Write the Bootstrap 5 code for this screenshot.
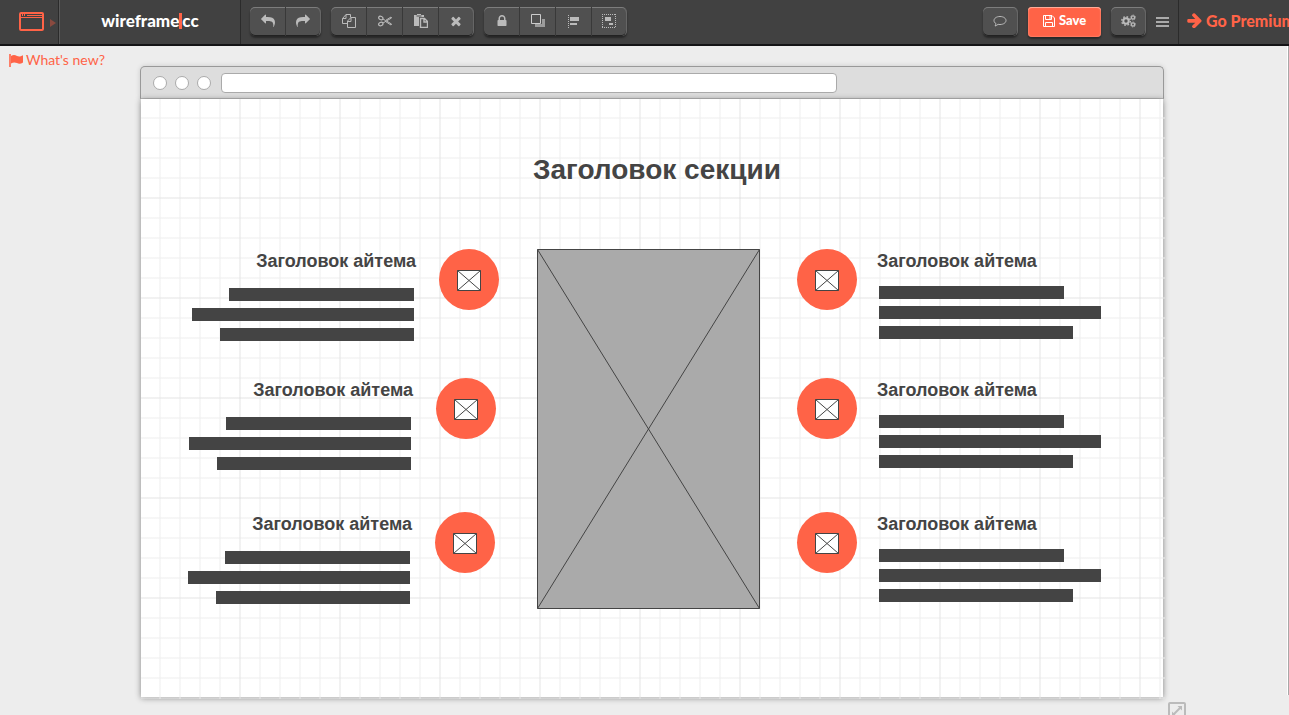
<!DOCTYPE html>
<html lang="ru">
<head>
<meta charset="utf-8">
<meta name="viewport" content="width=device-width, initial-scale=1">
<title>wireframe|cc</title>
<link href="https://cdn.jsdelivr.net/npm/bootstrap@5.3.0/dist/css/bootstrap.min.css" rel="stylesheet">
<style>
:root { --accent: #ff6347; --ink: #444; }
body { background: #ededed; font-family: Lato, sans-serif; }
svg { display: block; flex-shrink: 0; }

/* top bar */
.topbar { height: 46px; background: #414141; border-bottom: 2px solid #141416; }
.topbar a { text-decoration: none; }
.device-btn { width: 60px; padding: 0 0 2px 19px; gap: 6px; background: none; border: 0; border-right: 1px solid #5a5a5a; box-shadow: inset -1px 0 #2b2b2b; color: var(--accent); }
.brand-link { width: 181px; padding-bottom: 2px; border-right: 1px solid #2b2b2b; font-size: 17px; font-weight: 900; color: #fff; }
.brand-link i { width: 3px; height: 16px; background: var(--accent); }
.tools { gap: 10px; padding-left: 9px; padding-top: 7px; }
.tool-set { border-radius: 5px; box-shadow: 0 2px 2px rgba(0,0,0,.4); }
.tool { width: 36px; height: 29px; padding: 0 0 2px; border: 0; border-radius: 0; background: #505050; color: #bbb; box-shadow: inset 0 1px #7d7d7d, inset 0 -1px #222; border-right: 1px solid #393939; display: flex; align-items: center; justify-content: center; }
.tool:hover { background: #5a5a5a; color: #fff; }
.tool:first-child { border-top-left-radius: 5px; border-bottom-left-radius: 5px; }
.tool:last-child { width: 35px; border-top-right-radius: 5px; border-bottom-right-radius: 5px; border-right-color: #666; }
.actions { gap: 10px; padding-top: 7px; }
.save-btn { width: 73px; height: 30px; padding: 0 0 2px; gap: 4px; border: 0; border-radius: 4px; background: var(--accent); color: #fff; font-size: 13px; font-weight: 900; box-shadow: inset 0 1px #ffab98, inset 0 0 2px #ffab98, 0 2px 2px rgba(0,0,0,.4); }
.menu-btn { width: 32px; height: 28px; padding: 0; border: 0; background: none; color: #aaa; }
.premium { width: 111px; padding-left: 8px; gap: 4px; border-left: 1px solid #2b2b2b; font-size: 16px; font-weight: 900; color: var(--accent); white-space: nowrap; padding-bottom: 3px; overflow: hidden; }

/* workspace */
.side-left { width: 140px; padding: 4px 0 0 9px; }
.side-left a { font-size: 14px; line-height: 20px; gap: 3px; color: var(--accent); text-decoration: none; }
.side-right { width: 125px; padding-left: 4px; }
.rail { width: 2px; height: calc(100% - 20px); background: #a8a8a8; border-left: 1px solid #fff; }
.resize { width: 18px; height: 18px; margin-bottom: -5px; padding: 0; border: 2px solid #bbb; border-radius: 2px; background: none; color: #bbb; }
.sheet { margin-top: 20px; }
.chrome-bar { height: 33px; padding-left: 12px; gap: 8px; background: #ddd; border: 1px solid #999; border-bottom-color: #bbb; border-radius: 5px 5px 0 0; box-shadow: 0 0 5px rgba(0,0,0,.15); position: relative; }
.dot { width: 14px; height: 14px; border: 1px solid #aaa; border-radius: 50%; background: #fff; }
.address { width: 61%; height: 20px; margin-left: 2px; padding: 0 6px; border: 1px solid #aaa; border-radius: 4px; background: #fff; font-size: 12px; }
.artboard { height: 598px; margin: 0 1px; background: #fff; box-shadow: 0 1px 6px rgba(0,0,0,.45); position: relative; }
.artboard::before { content: ""; position: absolute; inset: 0 -2px -2px 0;
  background:
    linear-gradient(90deg, transparent 98px, rgba(0,0,0,.02) 98px) 0 0/100px 100px,
    linear-gradient(transparent 98px, rgba(0,0,0,.02) 98px) 0 0/100px 100px,
    linear-gradient(90deg, transparent 18px, rgba(238,238,238,.5) 18px) 0 0/20px 20px,
    linear-gradient(transparent 18px, rgba(238,238,238,.5) 18px) 0 0/20px 20px; }

/* stencils placed on the artboard */
.stencil { position: absolute; color: var(--ink); font-family: "Liberation Sans", sans-serif; }
.stencil h1 { margin: 0; font-size: 28px; line-height: 32px; font-weight: 700; white-space: nowrap; }
.stencil h2 { margin: 0; font-size: 18px; line-height: 24px; font-weight: 700; white-space: nowrap; }
.feature { gap: 22px; }
.feature-copy { width: 222px; }
.feature-start .feature-copy { margin-right: 3px; }
.feature-start h2 { margin-right: -2px; }
.feature-start .bars { align-items: flex-end; padding-top: 15px; }
.feature-end h2 { margin-left: -2px; }
.feature-end .bars { padding-top: 13px; }
.bars { gap: 7px; }
.bars span { height: 13px; background: var(--ink); }
.bar-a { width: 185px; } .bar-b { width: 222px; } .bar-c { width: 194px; }
.disc { width: 60px; height: 61px; border-radius: 50%; background: var(--accent); padding-top: 2px; }
</style>
</head>
<body class="vh-100 overflow-hidden d-flex flex-column">

<svg width="0" height="0" class="position-absolute" aria-hidden="true">
  <symbol id="i-share" viewBox="0 0 1792 1792"><path fill="currentColor" d="M1792 640q0 26-19 45l-512 512q-19 19-45 19t-45-19-19-45v-256h-224q-98 0-175.500 6t-154 21.500-133 42.500-105.500 69.500-80 101-48.500 138.500-17.500 181q0 55 5 123 0 6 2.500 23.500t2.500 26.500q0 15-8.500 25t-23.500 10q-16 0-28-17-7-9-13-22t-13.500-30-10.500-24q-127-285-127-451 0-199 53-333 162-403 875-403h224v-256q0-26 19-45t45-19 45 19l512 512q19 19 19 45z"/></symbol>
  <symbol id="i-mail" viewBox="0 0 24 21"><path fill="#fff" stroke="#444" d="M.5 .5h23v20h-23zl23 20M23.500 .5l-23 20"/></symbol>
</svg>

<header class="topbar d-flex flex-shrink-0">
  <button class="device-btn d-flex align-items-center" type="button" aria-label="Device">
    <svg width="25" height="19" viewBox="0 0 25 19" fill="none" stroke="currentColor"><rect x="1" y="1" width="23" height="17" rx="1" stroke-width="2"/><path stroke-width="1" d="M1 5.500h23M3.500 2v2M5.500 2v2M8 3.500h15"/></svg>
    <svg width="6" height="8" viewBox="0 0 6 8" class="mt-1"><path d="M0 0l6 4-6 4z" fill="#8a4a3f"/></svg>
  </button>
  <a class="brand-link d-flex align-items-center justify-content-center" href="#">wireframe<i></i>cc</a>
  <nav class="tools d-flex align-items-start" aria-label="Edit">
    <div class="tool-set d-flex">
      <button class="tool" type="button" aria-label="Undo"><svg width="14" height="14"><use href="#i-share" transform="matrix(-1 0 0 1 14 0)"/></svg></button>
      <button class="tool" type="button" aria-label="Redo"><svg width="14" height="14"><use href="#i-share"/></svg></button>
    </div>
    <div class="tool-set d-flex">
      <button class="tool" type="button" aria-label="Copy"><svg width="14" height="14" viewBox="0 0 14 14" fill="none" stroke="currentColor"><path d="M5.500 9.500h-5v-5l3.500-4h4.500v3M.5 4.500h3.500v-4M9 3.500h4.500v10h-8v-6.500l3.500-3.500zM5.500 7.500h3.500v-4"/></svg></button>
      <button class="tool" type="button" aria-label="Cut"><svg width="14" height="14" viewBox="0 0 14 14" fill="none" stroke="currentColor"><ellipse cx="2.800" cy="4" rx="2.200" ry="1.700" transform="rotate(25 2.800 4)" stroke-width="1.200"/><ellipse cx="2.800" cy="10" rx="2.200" ry="1.700" transform="rotate(-25 2.800 10)" stroke-width="1.200"/><path d="M5 5l2.500 1.500 5.500-3.500.5 1L5 9M7.500 7.500l5.500 3.500.5-1-5-3"/></svg></button>
      <button class="tool" type="button" aria-label="Paste"><svg width="14" height="14" viewBox="0 0 14 14"><path fill="currentColor" d="M0 1h3V0h4v1h3v2H5v9H0z"/><path fill="none" stroke="currentColor" stroke-width="1.400" d="M6.500 4.500h4l3 3v6h-7zM10 4.500v3.500h3.500"/><path stroke="#505050" d="M2.500 2h5"/></svg></button>
      <button class="tool" type="button" aria-label="Delete"><svg width="14" height="14" viewBox="0 0 1792 1792"><path fill="currentColor" d="M1490 1322q0 40-28 68l-136 136q-28 28-68 28t-68-28l-294-294-294 294q-28 28-68 28t-68-28l-136-136q-28-28-28-68t28-68l294-294-294-294q-28-28-28-68t28-68l136-136q28-28 68-28t68 28l294 294 294-294q28-28 68-28t68 28l136 136q28 28 28 68t-28 68l-294 294 294 294q28 28 28 68z"/></svg></button>
    </div>
    <div class="tool-set d-flex">
      <button class="tool" type="button" aria-label="Lock"><svg width="14" height="14" viewBox="0 0 1792 1792"><path fill="currentColor" d="M640 768h512v-192q0-106-75-181t-181-75-181 75-75 181v192zm832 96v576q0 40-28 68t-68 28h-960q-40 0-68-28t-28-68v-576q0-40 28-68t68-28h32v-192q0-184 132-316t316-132 316 132 132 316v192h32q40 0 68 28t28 68z"/></svg></button>
      <button class="tool" type="button" aria-label="Arrange"><svg width="14" height="14" viewBox="0 0 14 14"><path fill="currentColor" opacity=".7" d="M11 5h3v8H4v-3h7z"/><path fill="none" stroke="#ccc" d="M.5 .5h9v9h-9z"/></svg></button>
      <button class="tool" type="button" aria-label="Align"><svg width="14" height="14" viewBox="0 0 14 14"><path fill="currentColor" d="M3 3h9v4H3zM3 9h7v2H3z"/><path stroke="currentColor" stroke-dasharray="1 1" d="M1.500 1v13"/></svg></button>
      <button class="tool" type="button" aria-label="Group"><svg width="14" height="14" viewBox="0 0 14 14"><path fill="currentColor" d="M3 3h6v4H3zM7 9h4v2H7z"/><path fill="none" stroke="currentColor" stroke-dasharray="1 1" d="M0 .5h14M0 13.500h14M.5 0v14M13.500 0v14"/></svg></button>
    </div>
  </nav>
  <div class="actions d-flex align-items-start ms-auto">
    <div class="tool-set d-flex"><button class="tool" type="button" aria-label="Comments"><svg width="14" height="14" viewBox="0 0 14 14" fill="none" stroke="currentColor"><path d="M7 2.500c3.500 0 6 1.800 6 4s-2.500 4-6 4c-.7 0-1.300 0-1.900-.2-1 1-2 1.500-3.100 1.700.6-.7.900-1.400 1-2.400C1.700 8.900 1 7.800 1 6.500c0-2.200 2.500-4 6-4z"/></svg></button></div>
    <button class="save-btn d-flex align-items-center justify-content-center" type="button"><svg width="12" height="12" viewBox="0 0 12 12" fill="none" stroke="currentColor"><path d="M.5 .5h8.500l2.500 2.500v8.500h-11zM2.500 11.500v-4h7v4M2.500 .5v4h6v-4"/><path d="M7 1v3"/></svg>Save</button>
    <div class="tool-set d-flex"><button class="tool" type="button" aria-label="Settings"><svg width="15" height="14" viewBox="0 0 15 14" fill="none" stroke="currentColor"><circle cx="5" cy="7" r="2.700" stroke-width="2"/><circle cx="5" cy="7" r="4.300" stroke-width="1.400" stroke-dasharray="1.700 1.680"/><circle cx="12" cy="3.500" r="1.600" stroke-width="1.300"/><circle cx="12" cy="3.500" r="2.500" stroke-width=".8" stroke-dasharray="1 .96"/><circle cx="12" cy="10.500" r="1.600" stroke-width="1.300"/><circle cx="12" cy="10.500" r="2.500" stroke-width=".8" stroke-dasharray="1 .96"/></svg></button></div>
  </div>
  <button class="menu-btn d-flex align-items-center justify-content-center align-self-center" type="button" aria-label="Menu"><svg width="13" height="10" viewBox="0 0 13 10"><path fill="currentColor" d="M0 0h13v2H0zM0 4h13v2H0zM0 8h13v2H0z"/></svg></button>
  <a class="premium d-flex align-items-center" href="#"><svg width="15" height="15" viewBox="100 160 1540 1540"><path fill="currentColor" d="M1600 960q0 54-37 91l-651 651q-39 37-91 37-51 0-90-37l-75-75q-38-38-38-91t38-91l293-293h-704q-52 0-84.500-37.500t-32.500-90.500v-128q0-53 32.500-90.500t84.500-37.500h704l-293-294q-38-36-38-90t38-90l75-75q38-38 90-38 53 0 91 38l651 651q37 35 37 90z"/></svg>Go Premium</a>
</header>

<main class="d-flex flex-grow-1">
  <aside class="side-left flex-shrink-0">
    <a href="#" class="d-flex align-items-center"><svg width="14" height="13" viewBox="0 0 14 13"><path fill="currentColor" d="M0 0h2v13H0z" opacity=".8"/><path fill="currentColor" d="M2 2c2-1.500 4-1.500 6 0 2 .9 3.500 .5 6-.8v7.300c-2 1.300-4 1.700-6 .6-2-1.100-4-.9-6 .4z"/></svg>What's new?</a>
  </aside>

  <section class="sheet flex-grow-1">
    <div class="chrome-bar d-flex align-items-center">
      <span class="dot"></span><span class="dot"></span><span class="dot"></span>
      <input class="address" type="text" aria-label="Address">
    </div>
    <div class="artboard">
      <div class="stencil" style="left:392px;top:55px"><h1>Заголовок секции</h1></div>

      <div class="stencil feature feature-start d-flex" style="left:51px;top:150px">
        <div class="feature-copy"><h2 class="text-end">Заголовок айтема</h2><div class="bars d-flex flex-column"><span class="bar-a"></span><span class="bar-b"></span><span class="bar-c"></span></div></div>
        <div class="disc d-flex align-items-center justify-content-center"><svg width="24" height="21"><use href="#i-mail"/></svg></div>
      </div>
      <div class="stencil feature feature-start d-flex" style="left:48px;top:279px">
        <div class="feature-copy"><h2 class="text-end">Заголовок айтема</h2><div class="bars d-flex flex-column"><span class="bar-a"></span><span class="bar-b"></span><span class="bar-c"></span></div></div>
        <div class="disc d-flex align-items-center justify-content-center"><svg width="24" height="21"><use href="#i-mail"/></svg></div>
      </div>
      <div class="stencil feature feature-start d-flex" style="left:47px;top:413px">
        <div class="feature-copy"><h2 class="text-end">Заголовок айтема</h2><div class="bars d-flex flex-column"><span class="bar-a"></span><span class="bar-b"></span><span class="bar-c"></span></div></div>
        <div class="disc d-flex align-items-center justify-content-center"><svg width="24" height="21"><use href="#i-mail"/></svg></div>
      </div>

      <div class="stencil" style="left:396px;top:150px"><svg width="223" height="360" viewBox="0 0 223 360"><path fill="#aaa" stroke="#444" d="M.5 .5h222v359h-222zl222 359M222.500 .5l-222 359"/></svg></div>

      <div class="stencil feature feature-end d-flex" style="left:656px;top:150px">
        <div class="disc d-flex align-items-center justify-content-center"><svg width="24" height="21"><use href="#i-mail"/></svg></div>
        <div class="feature-copy"><h2>Заголовок айтема</h2><div class="bars d-flex flex-column"><span class="bar-a"></span><span class="bar-b"></span><span class="bar-c"></span></div></div>
      </div>
      <div class="stencil feature feature-end d-flex" style="left:656px;top:279px">
        <div class="disc d-flex align-items-center justify-content-center"><svg width="24" height="21"><use href="#i-mail"/></svg></div>
        <div class="feature-copy"><h2>Заголовок айтема</h2><div class="bars d-flex flex-column"><span class="bar-a"></span><span class="bar-b"></span><span class="bar-c"></span></div></div>
      </div>
      <div class="stencil feature feature-end d-flex" style="left:656px;top:413px">
        <div class="disc d-flex align-items-center justify-content-center"><svg width="24" height="21"><use href="#i-mail"/></svg></div>
        <div class="feature-copy"><h2>Заголовок айтема</h2><div class="bars d-flex flex-column"><span class="bar-a"></span><span class="bar-b"></span><span class="bar-c"></span></div></div>
      </div>
    </div>
  </section>

  <aside class="side-right flex-shrink-0 d-flex justify-content-between">
    <button class="resize align-self-end" type="button" aria-label="Resize canvas"><svg width="14" height="14" viewBox="0 0 14 14"><path fill="currentColor" d="M7.500 2H12v4.500zM2 7.500V12h4.500z"/><path stroke="currentColor" stroke-width="2" d="M10.500 3.500l-7 7"/></svg></button>
    <div class="rail"></div>
  </aside>
</main>
<script src="https://cdn.jsdelivr.net/npm/bootstrap@5.3.0/dist/js/bootstrap.bundle.min.js"></script>
</body>
</html>
